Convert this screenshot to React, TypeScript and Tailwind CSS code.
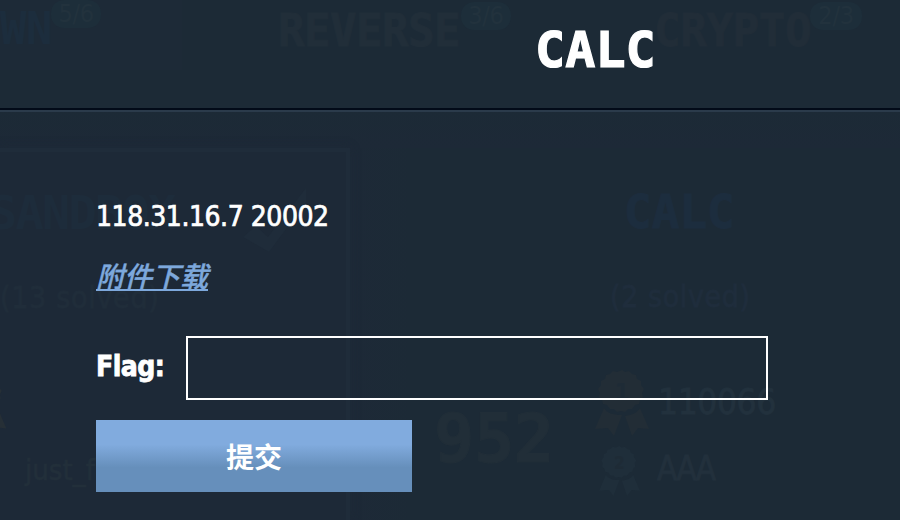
import React from "react";

const display = "font-['DejaVu_Sans_Mono','Liberation_Mono',monospace] font-bold whitespace-nowrap";

function Medal({ rank, className }: { rank: string; className: string }) {
  return (
    <svg viewBox="0 0 54 66" className={className} fill="currentColor">
      <path d="M27 0l3 2 4-1 3 3 4 1 1 4 4 2 0 4 3 4-2 4 1 4-3 3-1 4-4 1-3 4-4 0-3 3-4-1-4 1-3-3-4 0-3-4-4-1-1-4-3-3 1-4-2-4 3-4 0-4 4-2 1-4 4-1 3-3 4 1z" />
      <path d="M9 38c3 5 9 7 18 7l-8 21-6-8-13 1zM45 38c-3 5-8 7-15 8l7 20 6-8 11 1z" />
      <text x="27" y="30" textAnchor="middle" fontSize="23" fontFamily="DejaVu Sans Condensed" fontWeight="bold" fill="#1e2b36">{rank}</text>
    </svg>
  );
}

function Category({ name, count, className, badge }: { name: string; count: string; className: string; badge: string }) {
  return (
    <div className={`flex items-start text-[44px] leading-[58px] ${display} ${className}`}>
      <span>{name}</span>
      <span className={`flex h-7 items-center justify-center rounded-[13px] bg-[#1d2e3a] font-['DejaVu_Sans_Condensed','DejaVu_Sans',sans-serif] text-[25px] font-normal leading-7 tracking-[-0.2px] text-[#22323d] ${badge}`}>{count}</span>
    </div>
  );
}

function Board() {
  return (
    <div aria-hidden="true" className="h-[520px] w-[900px] overflow-hidden bg-[linear-gradient(90deg,#1d2937_0px,#1d2937_350px,#1c2a36_410px,#1c2a36_900px)] font-['DejaVu_Sans_Condensed','DejaVu_Sans',sans-serif]">
      <div className="grid h-[148px] grid-cols-[278px_376px_246px] bg-[linear-gradient(180deg,#1c2a36_0px,#1c2a36_110px,#1d2937_148px)]">
        <Category name="WN" count="5/6" className="h-[70px] bg-[linear-gradient(90deg,#1d2a37_0px,#1d2a37_182px,#1c2a36_182px)] tracking-[-0.4px] text-[#1c2d3d]" badge="-ml-px w-[50px]" />
        <Category name="REVERSE" count="3/6" className="pt-[2px] tracking-[-0.5px] text-[#212e39] [-webkit-text-stroke:1px_#212e39]" badge="ml-[1px] w-[50px] [-webkit-text-stroke:0]" />
        <Category name="CRYPTO" count="2/3" className="pt-[2px] tracking-[-0.3px] text-[#212d38] [-webkit-text-stroke:1px_#212d38]" badge="-ml-px w-[52px] [-webkit-text-stroke:0]" />
      </div>
      <div className="grid h-[372px] grid-cols-[350px_550px]">
        <div className="overflow-hidden border-r-4 border-t-4 border-[#1f2c3a] bg-[#1d2937] shadow-[0_0_8px_#1e2a37]">
          <div className="flex h-[115px] items-start">
            <div className={`-ml-[11px] w-[251px] pt-[31px] text-[47px] leading-[60px] tracking-[-1.8px] text-[#1d2c3b] ${display}`}>SANDBOX</div>
            <svg className="mt-9 h-[66px] w-[67px] shrink-0" viewBox="0 0 67 66" fill="#1f2c3a"><path d="M3 49l13-11 12 11L66 0v14L29 64z" /></svg>
          </div>
          <div className="h-[140px] pt-[13px] text-[30px] leading-[36px] tracking-[0.7px] text-[#202d3a] [-webkit-text-stroke:0.8px_#202d3a]">(13 solved)</div>
          <div className="flex h-[100px] items-start text-[#262f36]">
            <Medal rank="1" className="-ml-[46px] -mt-[34px] h-[62px] w-[54px] shrink-0" />
            <span className="ml-[17px] pt-[45px] text-[29px] leading-9 text-[#222f3a] [-webkit-text-stroke:0.6px_#222f3a]">just_f</span>
          </div>
        </div>
        <div>
          <div className={`h-[132px] pl-[274px] pt-[34px] text-[46px] leading-[60px] text-[#1c2d3e] [-webkit-text-stroke:1px_#1c2d3e] ${display}`}>CALC</div>
          <div className="h-[90px] pl-[260px] text-[30px] leading-[34px] tracking-[0.6px] text-[#1f2d3c] [-webkit-text-stroke:0.8px_#1f2d3c]">(2 solved)</div>
          <div className="flex">
            <div className={`w-[245px] pl-[84px] pt-[29px] text-[67px] leading-[80px] tracking-[-0.4px] text-[#212e38] [-webkit-text-stroke:1px_#212e38] ${display}`}>952</div>
            <div>
              <div className="flex h-[76px] items-start">
                <Medal rank="1" className="h-[66px] w-[54px] text-[#222d36]" />
                <span className="ml-[9px] pt-[12px] text-[35px] leading-[40px] tracking-[-0.4px] text-[#22313d] [-webkit-text-stroke:0.8px_#22313d]">110066</span>
              </div>
              <div className="flex items-start pl-[4px]">
                <Medal rank="2" className="h-[50px] w-[41px] text-[#1f2e3a]" />
                <span className="ml-[17px] pt-[4px] text-[33px] leading-[38px] tracking-[-1.8px] text-[#22303c] [-webkit-text-stroke:0.8px_#22303c]">AAA</span>
              </div>
            </div>
          </div>
        </div>
      </div>
    </div>
  );
}

export default function App() {
  return (
    <main className="relative h-[520px] w-[900px] overflow-hidden">
      <Board />
      <section role="dialog" className="absolute inset-0 font-['DejaVu_Sans_Condensed','DejaVu_Sans','Noto_Sans_CJK_SC',sans-serif] text-white">
        <header className="h-[112px] border-b-2 border-[#2b3b4b]">
          <div className="h-[110px] border-b-2 border-[#020a18] pl-[535px] pt-[20px]">
            <h1 className={`text-[50px] leading-[60px] tracking-[0.1px] [-webkit-text-stroke:1.2px_white] ${display}`}>CALC</h1>
          </div>
        </header>
        <div className="pl-24">
          <p className="pt-[87px] text-[28px] leading-9 tracking-[-0.45px] [-webkit-text-stroke:0.7px_white]">118.31.16.7 20002</p>
          <div className="flex h-[101px] pt-[21px]">
            <a href="#" className="h-[35px] w-[112px] border-b-2 border-[#7da8dc] font-['Noto_Sans_CJK_SC',sans-serif] text-[28px] font-medium italic leading-[38px] text-[#7da8dc] [-webkit-text-stroke:0.4px_#7da8dc]">附件下载</a>
          </div>
          <form onSubmit={(event) => event.preventDefault()}>
            <div className="flex h-16 items-center">
              <label htmlFor="flag" className="w-[90px] pb-[2px] text-[28px] font-bold leading-9 tracking-[-0.5px] [-webkit-text-stroke:0.8px_white]">Flag:</label>
              <input id="flag" className="h-16 w-[582px] border-2 border-white bg-transparent px-4 text-[28px] outline-none" />
            </div>
            <button className="mt-5 block h-[72px] w-[316px] bg-[linear-gradient(180deg,#81abde_0%,#81abde_34%,#668fbb_66%,#668fbb_100%)] font-['Noto_Sans_CJK_SC',sans-serif] text-[28px] font-bold leading-[70px]">提交</button>
          </form>
        </div>
      </section>
    </main>
  );
}
